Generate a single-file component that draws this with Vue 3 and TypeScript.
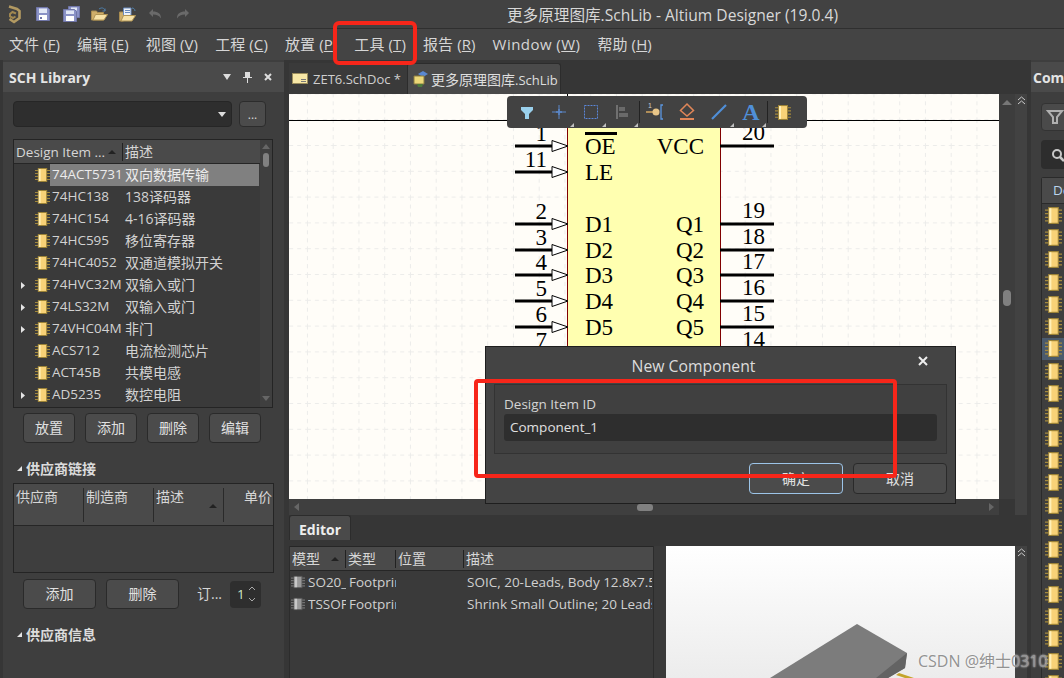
<script setup lang="ts">
const menus = [
  { t: '文件 (', k: 'F' }, { t: '编辑 (', k: 'E' }, { t: '视图 (', k: 'V' }, { t: '工程 (', k: 'C' },
  { t: '放置 (', k: 'P' }, { t: '工具 (', k: 'T' }, { t: '报告 (', k: 'R' }, { t: 'Window (', k: 'W', wide: true }, { t: '帮助 (', k: 'H' },
]
const items = [
  { n: '74ACT5731', d: '双向数据传输', sel: true },
  { n: '74HC138', d: '138译码器' },
  { n: '74HC154', d: '4-16译码器' },
  { n: '74HC595', d: '移位寄存器' },
  { n: '74HC4052', d: '双通道模拟开关' },
  { n: '74HVC32M', d: '双输入或门', exp: true },
  { n: '74LS32M', d: '双输入或门', exp: true },
  { n: '74VHC04M', d: '非门', exp: true },
  { n: 'ACS712', d: '电流检测芯片' },
  { n: 'ACT45B', d: '共模电感' },
  { n: 'AD5235', d: '数控电阻', exp: true },
]
const leftPins = [
  { n: '1', l: 'OE', y: 146 }, { n: '11', l: 'LE', y: 172 }, { n: '2', l: 'D1', y: 224 }, { n: '3', l: 'D2', y: 250 },
  { n: '4', l: 'D3', y: 275 }, { n: '5', l: 'D4', y: 301 }, { n: '6', l: 'D5', y: 327 }, { n: '7', l: 'D6', y: 353 },
]
const rightPins = [
  { n: '20', l: 'VCC', y: 146 }, { n: '19', l: 'Q1', y: 224 }, { n: '18', l: 'Q2', y: 250 }, { n: '17', l: 'Q3', y: 275 },
  { n: '16', l: 'Q4', y: 301 }, { n: '15', l: 'Q5', y: 327 }, { n: '14', l: 'Q6', y: 353 },
]
const rightRows = Array.from({ length: 22 }, (_, i) => i)
const models = [
  { n: 'SO20_', t: 'Footprint', d: 'SOIC, 20-Leads, Body 12.8x7.5' },
  { n: 'TSSOP', t: 'Footprint', d: 'Shrink Small Outline; 20 Leads' },
]
</script>

<template>
  <div class="app">
    <svg class="defs" width="0" height="0" aria-hidden="true">
      <symbol id="chip" viewBox="0 0 16 14" preserveAspectRatio="none">
        <path d="M0 2.500h4M0 5.500h4M0 8.500h4M0 11.500h4M12 2.500h4M12 5.500h4M12 8.500h4M12 11.500h4" stroke="#a58a3c" stroke-width="1" />
        <rect x="3.500" y="0.500" width="9" height="13" fill="#f8d277" stroke="#9c8338" />
        <rect x="4" y="1" width="2" height="12" fill="#fff0b8" />
      </symbol>
      <symbol id="gchip" viewBox="0 0 16 14">
        <path d="M0 2.500h4M0 5.500h4M0 8.500h4M0 11.500h4M12 2.500h4M12 5.500h4M12 8.500h4M12 11.500h4" stroke="#8a8a8a" stroke-width="1" />
        <rect x="3.500" y="0.500" width="9" height="13" fill="#9a9a9a" stroke="#5a5a5a" />
        <rect x="4" y="1" width="3" height="12" fill="#c8c8c8" />
      </symbol>
    </svg>

    <header class="titlebar">
      <svg class="logo" width="14" height="20" viewBox="0 0 14 20">
        <path d="M2 2.500l8 2.500 2.500 2v7l-5.500 4-4.500-3" fill="none" stroke="#b39a62" stroke-width="2.600" />
        <path d="M9 9.500L5.500 8 3 10v2.500l3 1.500 2.500-1.500" fill="none" stroke="#a08750" stroke-width="2" />
      </svg>
      <div class="qa">
        <svg width="14" height="14" viewBox="0 0 14 14"><path d="M.5.500h11l2 2v11H.5z" fill="#8a92c6" stroke="#7076a8" /><rect x="3" y="1.500" width="8" height="4.500" fill="#e2e8f6" /><rect x="3" y="8" width="8" height="5" fill="#fff" /><rect x="4" y="10" width="2" height="2" fill="#7076a8" /></svg>
        <svg width="17" height="16" viewBox="0 0 17 16"><path d="M5.500.500h11v11h-11z" fill="#8a92c6" stroke="#7076a8" /><path d="M8 1.500h6v3H8z" fill="#e2e8f6" /><path d="M.5 3.500h11l2 2v10H.5z" fill="#8a92c6" stroke="#7076a8" /><rect x="3" y="4.500" width="8" height="3.500" fill="#e2e8f6" /><rect x="3" y="10" width="8" height="5" fill="#fff" /></svg>
        <svg width="17" height="14" viewBox="0 0 17 14"><path d="M.5 13V4h5l1 1.500h6V13z" fill="#cfae6a" stroke="#a88c50" /><path d="M2 13l2.500-5.500h12L13 13z" fill="#f7e2a8" stroke="#b09454" /><path d="M8 2c3-2 5-1 6 1.500M14 1.500v2.500h-2.500" fill="none" stroke="#4f7ea8" /></svg>
        <svg width="17" height="15" viewBox="0 0 17 15"><path d="M.5 14V5h4v9z" fill="#cfae6a" stroke="#a88c50" /><path d="M4.500 1h7.500v8H4.500z" fill="#eef2f8" stroke="#6a8cc0" /><path d="M6 3.500h5M6 5.500h5" stroke="#6a8cc0" /><path d="M2 14l2.500-5.500h12L13 14z" fill="#f7e2a8" stroke="#b09454" /><path d="M13 1c1.500 0 3 1 3 3" fill="none" stroke="#4f7ea8" /></svg>
        <svg width="15" height="12" viewBox="0 0 15 12"><path d="M5 1L1 5l4 4V6.500c4 0 6 1 8 4 0-5-3-7-8-7z" fill="#6a6a6a" /></svg>
        <svg width="15" height="12" viewBox="0 0 15 12"><path d="M10 1l4 4-4 4V6.500c-4 0-6 1-8 4 0-5 3-7 8-7z" fill="#6a6a6a" /></svg>
      </div>
      <div class="wintitle">更多原理图库.SchLib - Altium Designer (19.0.4)</div>
    </header>

    <nav class="menubar">
      <span v-for="m in menus" :key="m.k" class="menu" :class="{ wide: m.wide }">{{ m.t }}<u>{{ m.k }}</u>)</span>
    </nav>

    <div class="main">
      <aside class="left">
        <div class="phead">
          <b>SCH Library</b>
          <span class="pctl">
            <svg width="8" height="6" viewBox="0 0 8 6"><path d="M0 0h8L4 6z" fill="#ddd" /></svg>
            <svg width="9" height="11" viewBox="0 0 9 11"><path d="M2 0h5v5h2v1H5v5H4V6H0V5h2z" fill="#ddd" /></svg>
            <svg width="8" height="8" viewBox="0 0 8 8"><path d="M1 1l6 6M7 1L1 7" stroke="#ddd" stroke-width="2" /></svg>
          </span>
        </div>
        <div class="filter">
          <div class="combo"><svg width="8" height="5" viewBox="0 0 8 5"><path d="M0 0h8L4 5z" fill="#ddd" /></svg></div>
          <div class="dots">...</div>
        </div>
        <div class="tree">
          <div class="thead">
            <span class="c1">Design Item ...<svg width="8" height="4" viewBox="0 0 8 4"><path d="M4 0l4 4H0z" fill="#222" /></svg></span>
            <span class="c2">描述</span>
          </div>
          <div class="tscroll">
            <svg width="8" height="5" viewBox="0 0 8 5"><path d="M4 0l4 5H0z" fill="#666" /></svg>
            <i></i>
            <svg class="down" width="8" height="5" viewBox="0 0 8 5"><path d="M0 0h8L4 5z" fill="#666" /></svg>
          </div>
          <div v-for="it in items" :key="it.n" class="trow">
            <span class="exp"><svg v-if="it.exp" width="4" height="7" viewBox="0 0 4 7"><path d="M0 0l4 3.500L0 7z" fill="#e4e4e4" /></svg></span>
            <svg class="chip" width="15" height="14"><use href="#chip" /></svg>
            <span class="tbody" :class="{ sel: it.sel }"><span class="nm">{{ it.n }}</span><span class="ds">{{ it.d }}</span></span>
          </div>
        </div>
        <div class="btnrow four">
          <button>放置</button><button>添加</button><button>删除</button><button>编辑</button>
        </div>
        <div class="sect"><svg width="5" height="5" viewBox="0 0 5 5"><path d="M5 0v5H0z" fill="#e4e4e4" /></svg>供应商链接</div>
        <div class="vendor">
          <div class="vhead">
            <span>供应商</span><span>制造商</span>
            <span class="sorted">描述<svg width="8" height="4" viewBox="0 0 8 4"><path d="M4 0l4 4H0z" fill="#222" /></svg></span>
            <span class="price">单价</span>
          </div>
        </div>
        <div class="btnrow two">
          <button>添加</button><button>删除</button>
          <span class="ord">订...</span>
          <span class="spin">1<svg width="8" height="18" viewBox="0 0 8 18"><path d="M1 5l3-3 3 3M1 13l3 3 3-3" fill="none" stroke="#aaa" /></svg></span>
        </div>
        <div class="sect last"><svg width="5" height="5" viewBox="0 0 5 5"><path d="M5 0v5H0z" fill="#e4e4e4" /></svg>供应商信息</div>
      </aside>

      <section class="center">
        <div class="tabs">
          <div class="tab t1">
            <svg width="16" height="11" viewBox="0 0 16 11"><rect x=".5" y=".5" width="15" height="10" fill="#f7e7a6" stroke="#9a8c5c" /><path d="M9 6.500h5M9 8.500h5" stroke="#777" /></svg>
            ZET6.SchDoc *
          </div>
          <div class="tab t2">
            <svg width="17" height="16" viewBox="0 0 17 16"><path d="M6 3l5-3 5 3-5 3z" fill="#5a88d0" /><path d="M2 5h10v8H2z" fill="#ecd878" stroke="#8a7a40" /><path d="M5 13h6l-1 3H6z" fill="#4c7a3c" /></svg>
            <span class="tabt"><span class="cjk">更多原理图库</span>.SchLib</span>
          </div>
        </div>
        <div class="work">
          <div class="canvascol">
            <div class="canvas">
              <svg class="sch" viewBox="289 94 710 405" width="710" height="405">
                <defs>
                  <pattern id="grid" x="23.700" y="16" width="25.750" height="25.800" patternUnits="userSpaceOnUse">
                    <path d="M0 .5H26M.5 0V26" stroke="#ececea" stroke-width="1" stroke-dasharray="4 4" fill="none" />
                  </pattern>
                </defs>
                <rect x="289" y="94" width="710" height="405" fill="url(#grid)" />
                <path d="M289 120.500H999M567.500 94V120" stroke="#000" fill="none" />
                <rect x="567.500" y="118" width="153" height="300" fill="#ffffb0" stroke="#800000" />
                <path d="M585 133.500H617" stroke="#000" stroke-width="3" />
                <g v-for="p in leftPins" :key="p.n">
                  <path :d="`M515 ${p.y}H552`" stroke="#000" stroke-width="3" />
                  <path :d="`M552 ${p.y - 5.500}L568 ${p.y}L552 ${p.y + 5.500}z`" fill="#fff" stroke="#000" />
                  <text class="pt" x="547" :y="p.y - 5.500" text-anchor="end">{{ p.n }}</text>
                  <text class="pt" x="585" :y="p.y + 7.500">{{ p.l }}</text>
                </g>
                <g v-for="p in rightPins" :key="p.n">
                  <path :d="`M720 ${p.y}H774`" stroke="#000" stroke-width="3" />
                  <text class="pt" x="765" :y="p.y - 6" text-anchor="end">{{ p.n }}</text>
                  <text class="pt" x="704" :y="p.y + 7.500" text-anchor="end">{{ p.l }}</text>
                </g>
              </svg>
              <div class="toolbar">
                <span class="tb"><svg width="24" height="24" viewBox="0 0 24 24"><path d="M6 7h12v3l-4 4v5h-4v-5L6 10z" fill="#9ad0ec" /></svg></span>
                <span class="tb cor"><svg width="24" height="24" viewBox="0 0 24 24"><path d="M12 5v14M5 12h14" stroke="#5b86c8" /><path d="M9 12h6M12 9v6" stroke="#5b86c8" stroke-width="1.500" /></svg></span>
                <span class="tb cor"><svg width="24" height="24" viewBox="0 0 24 24"><rect x="5.500" y="5.500" width="13" height="13" fill="none" stroke="#5b86d8" stroke-dasharray="2 1" /></svg></span>
                <span class="tb cor"><svg width="24" height="24" viewBox="0 0 24 24"><path d="M6 5v14" stroke="#707070" stroke-width="2" /><path d="M8 7h6v4H8zM8 13h9v4H8z" fill="#6a6a6a" /></svg></span>
                <span class="tb sep"><svg width="24" height="24" viewBox="0 0 24 24"><path d="M3 12h9" stroke="#d6a860" stroke-width="1.500" /><circle cx="13" cy="12" r="3.500" fill="#e8c588" /><path d="M20 19h-2V5h2" fill="none" stroke="#5b96e0" stroke-width="1.300" /><text class="mini" x="5" y="8">1</text></svg></span>
                <span class="tb"><svg width="24" height="24" viewBox="0 0 24 24"><path d="M12 4l6.500 6.500L12 16l-6.500-5.500z" fill="none" stroke="#e08658" stroke-width="1.500" /><path d="M5 19h14" stroke="#e08658" stroke-width="2" /></svg></span>
                <span class="tb cor"><svg width="24" height="24" viewBox="0 0 24 24"><path d="M5 19L19 5" stroke="#4f8fd8" stroke-width="2.200" /></svg></span>
                <span class="tb cor big">A</span>
                <span class="tb sep"><svg width="16" height="15"><use href="#chip" /></svg></span>
              </div>
            </div>
            <div class="hscroll">
              <svg width="5" height="8" viewBox="0 0 5 8"><path d="M5 0v8L0 4z" fill="#666" /></svg>
              <i></i>
              <svg width="5" height="8" viewBox="0 0 5 8"><path d="M0 0v8l5-4z" fill="#666" /></svg>
            </div>
          </div>
          <div class="vscroll">
            <svg width="10" height="5" viewBox="0 0 10 5"><path d="M5 0l5 5H0z" fill="#777" /></svg>
            <i></i>
          </div>
          <div class="strip">
            <svg width="9" height="9" viewBox="0 0 9 9"><path d="M1 4l3.500-3L8 4M1 8l3.500-3L8 8" fill="none" stroke="#ccc" /></svg>
          </div>
        </div>
        <div class="edtabs"><div class="edtab">Editor</div></div>
        <div class="editor">
          <div class="models">
            <div class="mhead">
              <span class="m1">模型<svg width="8" height="4" viewBox="0 0 8 4"><path d="M4 0l4 4H0z" fill="#222" /></svg></span>
              <span class="m2">类型</span><span class="m3">位置</span><span class="m4">描述</span>
            </div>
            <div v-for="m in models" :key="m.n" class="mrow">
              <svg width="14" height="14"><use href="#gchip" /></svg>
              <span class="mn">{{ m.n }}</span><span class="mt">{{ m.t }}</span><span class="md">{{ m.d }}</span>
            </div>
          </div>
          <div class="preview">
            <svg class="pkg" width="349" height="132" viewBox="666 546 349 132">
              <path d="M770 678L857 624L907 653L905 668L888 678z" fill="#7c7c7c" />
              <path d="M907 653L905 668L888 678L876 678z" fill="#636363" />
              <path d="M899 673l15 5h-9l-9-3z" fill="#c4a42c" />
            </svg>
          </div>
          <div class="strip">
            <svg width="9" height="9" viewBox="0 0 9 9"><path d="M1 4l3.500-3L8 4M1 8l3.500-3L8 8" fill="none" stroke="#ccc" /></svg>
          </div>
        </div>
      </section>

      <aside class="right">
        <div class="phead rh"><b>Com</b></div>
        <div class="rbtn">
          <svg width="18" height="18" viewBox="0 0 18 18"><path d="M2 3h14l-5 6v6H7V9z" fill="none" stroke="#b0b0b0" stroke-width="2" /></svg>
        </div>
        <div class="rsearch">
          <svg width="14" height="14" viewBox="0 0 14 14"><circle cx="6" cy="6" r="4" fill="none" stroke="#c8c8c8" stroke-width="2" /><path d="M9 9l4 4" stroke="#c8c8c8" stroke-width="2.500" /></svg>
        </div>
        <div class="rtable">
          <div class="rhead">De</div>
          <div v-for="r in rightRows" :key="r" class="rrow" :class="{ on: r === 6 }">
            <svg width="17" height="17"><use href="#chip" /></svg>
          </div>
        </div>
      </aside>
    </div>

    <div class="dialog">
      <div class="dtitle"><span>New Component</span><svg width="10" height="10" viewBox="0 0 10 10"><path d="M1 1l8 8M9 1L1 9" stroke="#eee" stroke-width="2" /></svg></div>
      <div class="dbox">
        <label>Design Item ID</label>
        <div class="dinput">Component_1</div>
      </div>
      <div class="dbtns"><button class="ok">确定</button><button>取消</button></div>
    </div>

    <div class="mark m-a"></div>
    <div class="mark m-b"></div>
    <div class="wm">CSDN @绅士0310</div>
  </div>
</template>

<style>
html, body { margin: 0; background: #3a3a3a; }
</style>

<style scoped>
.app {
  position: relative;
  width: 1064px;
  height: 678px;
  overflow: hidden;
  background: #3a3a3a;
  color: #d6d6d6;
  font-family: "Open Sans", "Noto Sans CJK SC", sans-serif;
  font-size: 13.500px;
}
.defs { position: absolute; }
button { font: inherit; font-size: 14px; color: #e0e0e0; background: #4b4b4b; border: 1px solid #2a2a2a; border-radius: 4px; padding: 0 0 2px; }

.titlebar { height: 28px; display: flex; align-items: center; background: #424242; border-bottom: 1px solid #2f2f2f; position: relative; }
.logo { margin-left: 7px; }
.qa { display: flex; align-items: center; margin-left: 15px; }
.qa svg { margin-right: 12px; }
.qa svg:nth-child(1) { margin-right: 13px; }
.qa svg:nth-child(2), .qa svg:nth-child(3) { margin-right: 11px; }
.wintitle { position: absolute; left: 507px; top: 3px; font-size: 15.600px; line-height: 24px; color: #d8d8d8; white-space: nowrap; }

.menubar { height: 31px; display: flex; align-items: center; background: #444; padding-left: 9px; gap: 17px; font-size: 15px; letter-spacing: .1px; }
.menu { white-space: nowrap; color: #d6d6d6; padding-bottom: 2px; }
.menu.wide { letter-spacing: .45px; }

.main { height: 618px; display: flex; background: #363636; }
.left { width: 281px; margin-left: 3px; margin-right: 5px; background: #3e3e3e; display: flex; flex-direction: column; flex: none; position: relative; }
.phead { height: 30px; margin-top: 2px; background: #4a4a4a; display: flex; align-items: center; justify-content: space-between; padding: 0 6px; font-size: 14px; color: #e4e4e4; box-sizing: border-box; flex: none; }
.pctl { display: flex; align-items: center; gap: 12px; margin-right: 6px; }
.filter { display: flex; gap: 7px; margin: 9px 0 0 10px; }
.combo { width: 219px; height: 26px; background: #2e2e2e; border: 1px solid #262626; border-radius: 4px; box-sizing: border-box; display: flex; align-items: center; justify-content: flex-end; padding-right: 5px; }
.dots { width: 27px; height: 26px; background: #4b4b4b; border: 1px solid #2c2c2c; border-radius: 4px; box-sizing: border-box; text-align: center; font-size: 12px; line-height: 26px; }
.tree { position: relative; width: 260px; height: 269px; margin: 12px 0 0 10px; border: 1px solid #242424; box-sizing: border-box; background: #3a3a3a; flex: none; }
.thead { height: 24px; width: 246px; background: #4a4a4a; border-bottom: 1px solid #262626; box-sizing: border-box; display: flex; align-items: center; line-height: 18px; }
.c1 { width: 109px; padding-left: 2px; box-sizing: border-box; display: flex; align-items: center; justify-content: space-between; padding-right: 6px; border-right: 1px solid #222; white-space: nowrap; height: 18px; }
.c2 { padding-left: 2px; font-size: 14px; }
.tscroll { position: absolute; right: 0; top: 0; bottom: 0; width: 12px; background: #3f3f3f; display: flex; flex-direction: column; align-items: center; padding-top: 4px; box-sizing: border-box; }
.tscroll i { display: block; width: 6px; height: 14px; border-radius: 3px; background: #808080; margin-top: 4px; }
.tscroll .down { margin-top: auto; margin-bottom: 6px; }
.trow { height: 22px; display: flex; align-items: center; width: 245px; }
.exp { width: 21px; padding-left: 7px; box-sizing: border-box; display: flex; }
.chip { flex: none; }
.tbody { flex: 1; display: flex; height: 22px; align-items: center; white-space: nowrap; color: #d2d2d2; padding-bottom: 2px; box-sizing: border-box; }
.tbody.sel { background: #808080; color: #ececec; }
.nm { width: 75px; padding-left: 2px; box-sizing: border-box; overflow: hidden; flex: none; padding-right: 1px; }
.ds { font-size: 14px; }
.btnrow { display: flex; align-items: center; flex: none; }
.btnrow.four { margin: 5px 0 0 20px; gap: 10px; }
.four button { width: 52px; height: 30px; }
.sect { font-weight: 700; font-size: 14px; color: #dcdcdc; display: flex; align-items: center; gap: 4px; margin: 16px 0 0 14px; height: 20px; padding-bottom: 2px; box-sizing: border-box; flex: none; }
.vendor { width: 261px; height: 90px; margin: 4px 0 0 10px; border: 1px solid #242424; box-sizing: border-box; flex: none; }
.vhead { height: 42px; background: #4a4a4a; border-bottom: 1px solid #262626; box-sizing: border-box; display: flex; font-size: 14px; }
.vhead span { width: 70px; box-sizing: border-box; padding: 0 0 0 2px; margin-top: 4px; border-right: 1px solid #2a2a2a; height: 34px; line-height: 18px; flex: none; position: relative; }
.sorted svg { position: absolute; right: 6px; top: 16px; }
.vhead .price { border: 0; width: 50px; text-align: right; padding-right: 2px; }
.btnrow.two { margin: 6px 0 0 20px; gap: 10px; }
.two button { width: 73px; height: 30px; }
.ord { margin-left: 8px; width: 23px; white-space: nowrap; font-size: 14px; padding-bottom: 2px; }
.spin { width: 31px; height: 27px; background: #2e2e2e; border-radius: 4px; display: flex; align-items: center; justify-content: space-between; box-sizing: border-box; padding: 0 5px 0 7px; color: #cfe8c8; }
.sect.last { margin-top: 16px; }

.center { width: 738px; flex: none; display: flex; flex-direction: column; }
.tabs { height: 34px; display: flex; align-items: flex-end; flex: none; }
.tab { height: 31px; display: flex; align-items: center; box-sizing: border-box; white-space: nowrap; font-size: 13px; }
.t1 { width: 118px; padding-left: 3px; gap: 5px; background: #3a3a3a; color: #cfcfcf; }
.t2 { width: 154px; padding-left: 4px; gap: 2px; background: #4a4a4a; border-radius: 3px 3px 0 0; border: 1px solid #2c2c2c; border-bottom: 0; color: #dedede; }
.cjk { font-size: 14px; }
.work { height: 421px; display: flex; flex: none; }
.canvascol { width: 710px; display: flex; flex-direction: column; }
.canvas { position: relative; height: 405px; background: #fffdf8; }
.sch { display: block; }
.pt { font-family: "Liberation Serif", serif; font-size: 23px; fill: #000; }
.toolbar { position: absolute; left: 218px; top: 2px; height: 32px; width: 300px; box-sizing: border-box; padding-left: 4px; background: #424242; border-radius: 4px; display: flex; align-items: center; }
.tb { width: 32px; height: 32px; flex: none; display: flex; align-items: center; justify-content: center; position: relative; box-sizing: border-box; }
.tb.cor::after { content: ""; position: absolute; right: 1px; bottom: 1px; border: 2.500px solid transparent; border-right-color: #c0c0c0; border-bottom-color: #c0c0c0; }
.tb.sep::before { content: ""; position: absolute; left: 0; top: 5px; height: 22px; width: 1px; background: #222; }
.big { font-family: "Liberation Serif", serif; font-weight: 700; font-size: 24px; color: #4f8fd8; }
.mini { font-family: "Liberation Sans", sans-serif; font-size: 7px; fill: #cfcfcf; }
.hscroll { height: 16px; background: #3f3f3f; display: flex; align-items: center; justify-content: space-between; padding: 0 5px; position: relative; box-sizing: border-box; }
.hscroll i { position: absolute; left: 348px; top: 5px; width: 16px; height: 7px; border-radius: 3px; background: #808080; }
.vscroll { width: 16px; background: #3d3d3d; position: relative; display: flex; justify-content: center; padding-top: 6px; box-sizing: border-box; height: 405px; }
.vscroll i { position: absolute; left: 4px; top: 196px; width: 8px; height: 16px; border-radius: 4px; background: #808080; }
.strip { width: 12px; background: #424242; flex: none; display: flex; justify-content: center; padding-top: 2px; box-sizing: border-box; height: 100%; }
.edtabs { height: 31px; display: flex; align-items: flex-end; padding-bottom: 6px; box-sizing: border-box; flex: none; }
.edtab { width: 62px; height: 25px; background: #4a4a4a; border: 1px solid #2c2c2c; border-bottom: 0; border-radius: 3px 3px 0 0; box-sizing: border-box; font-weight: 700; font-size: 14px; color: #eee; text-align: center; line-height: 27px; }
.editor { flex: 1; display: flex; background: #3a3a3a; min-height: 0; }
.models { width: 365px; border-left: 1px solid #2c2c2c; border-right: 1px solid #2c2c2c; box-sizing: border-box; flex: none; margin-right: 12px; background: #3a3a3a; }
.mhead { height: 25px; background: #4a4a4a; border-top: 1px solid #262626; border-bottom: 1px solid #262626; box-sizing: border-box; display: flex; align-items: center; font-size: 14px; }
.mhead span { height: 18px; line-height: 18px; padding-left: 2px; box-sizing: border-box; border-right: 1px solid #222; flex: none; display: flex; align-items: center; justify-content: space-between; }
.mhead svg { margin-right: 6px; }
.m1 { width: 56px; }
.m2 { width: 50px; }
.m3 { width: 68px; }
.mhead .m4 { border: 0; }
.mrow { height: 22px; display: flex; align-items: center; white-space: nowrap; overflow: hidden; color: #d0d0d0; padding-left: 1px; box-sizing: border-box; }
.mrow svg { flex: none; margin-right: 3px; }
.mn { width: 38px; overflow: hidden; flex: none; }
.mt { width: 47px; overflow: hidden; flex: none; margin-left: 3px; margin-right: 71px; }
.md { width: 185px; overflow: hidden; flex: none; }
.preview { width: 349px; flex: none; background: linear-gradient(#fff, #ececec); overflow: hidden; }
.pkg { display: block; }

.right { flex: 1; margin-left: 4px; background: #3e3e3e; display: flex; flex-direction: column; overflow: hidden; }
.rh { padding: 0 2px; }
.rbtn { width: 40px; height: 28px; margin: 11px 0 0 10px; background: #4a4a4a; border: 1px solid #333; border-radius: 4px; box-sizing: border-box; display: flex; align-items: center; padding-left: 4px; flex: none; }
.rsearch { width: 40px; height: 29px; margin: 9px 0 0 10px; background: #2d2d2d; border-radius: 4px; display: flex; align-items: center; padding-left: 10px; box-sizing: border-box; flex: none; }
.rtable { margin: 8px 0 0 10px; border-left: 1px solid #2a2a2a; border-top: 1px solid #2a2a2a; border-radius: 3px 0 0 0; }
.rhead { height: 26px; box-sizing: border-box; background: #4a4a4a; line-height: 25px; padding-left: 11px; color: #bcd4ee; border-bottom: 1px solid #2a2a2a; }
.rrow { height: 22.300px; display: flex; align-items: center; padding-left: 3px; box-sizing: border-box; }
.rrow.on { background: #4a5a6c; }

.dialog { position: absolute; left: 485px; top: 346px; width: 471px; height: 158px; box-sizing: border-box; background: #444; border: 1px solid #1e1e1e; padding: 0 8px; display: flex; flex-direction: column; }
.dtitle { height: 37px; line-height: 38px; text-align: center; font-size: 15.750px; color: #dcdcdc; position: relative; padding-right: 54px; flex: none; }
.dtitle svg { position: absolute; right: 19px; top: 9px; }
.dbox { height: 70px; background: #404040; border: 1px solid #333; box-sizing: border-box; padding: 10px 9px 0; flex: none; }
.dbox label { display: block; height: 19px; line-height: 19px; color: #d4d4d4; }
.dinput { height: 27px; background: #2e2e2e; border-radius: 3px; padding-left: 6px; line-height: 26px; color: #e0e0e0; }
.dbtns { display: flex; justify-content: flex-end; gap: 10px; margin-top: 9px; }
.dbtns button { width: 94px; height: 31px; }
.dbtns .ok { border-color: #9cc4e8; }

.mark { position: absolute; border: 4px solid #f7261a; box-sizing: border-box; }
.m-a { left: 333px; top: 21px; width: 84px; height: 44px; border-radius: 6px; }
.m-b { left: 474px; top: 379px; width: 423px; height: 99px; border-radius: 4px; }
.wm { position: absolute; left: 918px; top: 650px; font-size: 16px; line-height: 22px; color: #929292; text-shadow: 0 0 2px #fff; white-space: nowrap; }
</style>
